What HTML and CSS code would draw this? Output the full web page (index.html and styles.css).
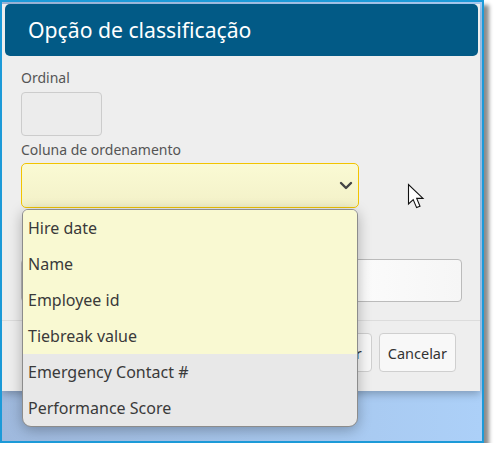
FILE: index.html
```html
<!DOCTYPE html>
<html lang="pt">
<head>
  <meta charset="UTF-8" />
  <meta name="viewport" content="width=device-width, initial-scale=1" />
  <title>Opção de classificação</title>
  <link rel="stylesheet" href="styles.css">
</head>
<body>

  <div class="screen">
    <div class="dialog">
      <div class="dialog-header">Opção de classificação</div>

      <div class="dialog-body">
        <label class="field-label">Ordinal</label>
        <div class="input input-small"></div>

        <label class="field-label">Coluna de ordenamento</label>
        <div class="select-wrap">
          <div class="select">
            <svg class="chevron" width="14" height="9" viewBox="0 0 14 9">
              <path d="M2 2 L7 7 L12 2" fill="none" stroke="#444" stroke-width="2.4" stroke-linecap="round" stroke-linejoin="round" />
            </svg>
          </div>

          <ul class="dropdown">
            <li class="current">Hire date</li>
            <li class="current">Name</li>
            <li class="current">Employee id</li>
            <li class="current">Tiebreak value</li>
            <li>Emergency Contact #</li>
            <li>Performance Score</li>
          </ul>
        </div>

        <div class="input input-wide"></div>
      </div>

      <div class="dialog-footer">
        <button class="btn">Salvar</button>
        <button class="btn">Cancelar</button>
      </div>
    </div>

    <!-- ponteiro do mouse -->
    <svg class="cursor" width="20" height="28" viewBox="0 0 20 28">
      <path d="M1.5 1.5 L1.5 21 L6.2 16.6 L9.6 24.6 L13 23.2 L9.7 15.4 L16 15.4 Z" fill="#fff" stroke="#111" stroke-width="1.1" stroke-linejoin="miter" />
    </svg>
  </div>

</body>
</html>
```

FILE: styles.css
```css
* { box-sizing: border-box; margin: 0; padding: 0; }

body {
  background: #fff;
  font-family: "Noto Sans", "Open Sans", sans-serif;
  color: #333;
}

.screen {
  position: relative;
  width: 484px;
  height: 443px;
  border: 2px solid #1c9ad8;
  background: linear-gradient(to right, #9fb9dd, #acd0f8);
  box-shadow: 5px 5px 4px rgba(0,0,0,0.45);
  overflow: hidden;
}

.dialog {
  width: 478px;
  background: #eeeeee;
  box-shadow: 0 3px 8px rgba(0,0,0,0.25);
}

.dialog-header {
  margin: 2px 2px 0 3px;
  height: 52px;
  line-height: 52px;
  padding-left: 23px;
  background: #025a86;
  color: #fff;
  font-size: 21.2px;
  border-radius: 5px;
}

.dialog-body {
  padding: 12px 0 0 19px;
  display: flex;
  flex-direction: column;
  align-items: flex-start;
}

.field-label {
  font-size: 14px;
  line-height: 20px;
  color: #555;
  margin-bottom: 4px;
}

.field-label + .input-small + .field-label {
  margin-top: 4px;
  margin-bottom: 3px;
}

.input {
  border: 1px solid #ccc;
  border-radius: 4px;
}

.input-small {
  width: 81px;
  height: 44px;
  background: #ececec;
}

.input-wide {
  margin-top: 51px;
  width: 441px;
  height: 43px;
  background: linear-gradient(to right, #fff 60%, #f6f6f6);
  border-color: #bbb;
}

.select-wrap {
  position: relative;
}

.select {
  width: 338px;
  height: 45px;
  border: 1px solid #f2c400;
  border-radius: 5px;
  background: linear-gradient(#fafad4, #f3f1c8);
  display: flex;
  align-items: center;
  justify-content: flex-end;
  padding-right: 5px;
}

.dropdown {
  position: absolute;
  top: calc(100% + 1px);
  left: 1px;
  width: 336px;
  list-style: none;
  border: 1px solid #8c8c8c;
  border-radius: 6px 6px 9px 9px;
  overflow: hidden;
  background: #e8e8e8;
  box-shadow: 0 3px 14px rgba(0,0,0,0.28);
  z-index: 2;
}

.dropdown li {
  height: 36px;
  line-height: 36px;
  padding-left: 5px;
  font-size: 16px;
  color: #3a3a3a;
}

.dropdown li.current {
  background: #f9f9d2;
}

.dialog-footer {
  margin-top: 18px;
  border-top: 1px solid #dcdcdc;
  padding: 12px 24px 19px 0;
  display: flex;
  justify-content: flex-end;
  gap: 7px;
}

.btn {
  height: 39px;
  padding: 0 9px;
  font-family: inherit;
  font-size: 14.5px;
  color: #333;
  background: #f8f8f8;
  border: 1px solid #cfcfcf;
  border-radius: 4px;
}

.btn + .btn {
  padding: 0 8px;
}

.cursor {
  position: absolute;
  left: 405px;
  top: 181px;
}
```
